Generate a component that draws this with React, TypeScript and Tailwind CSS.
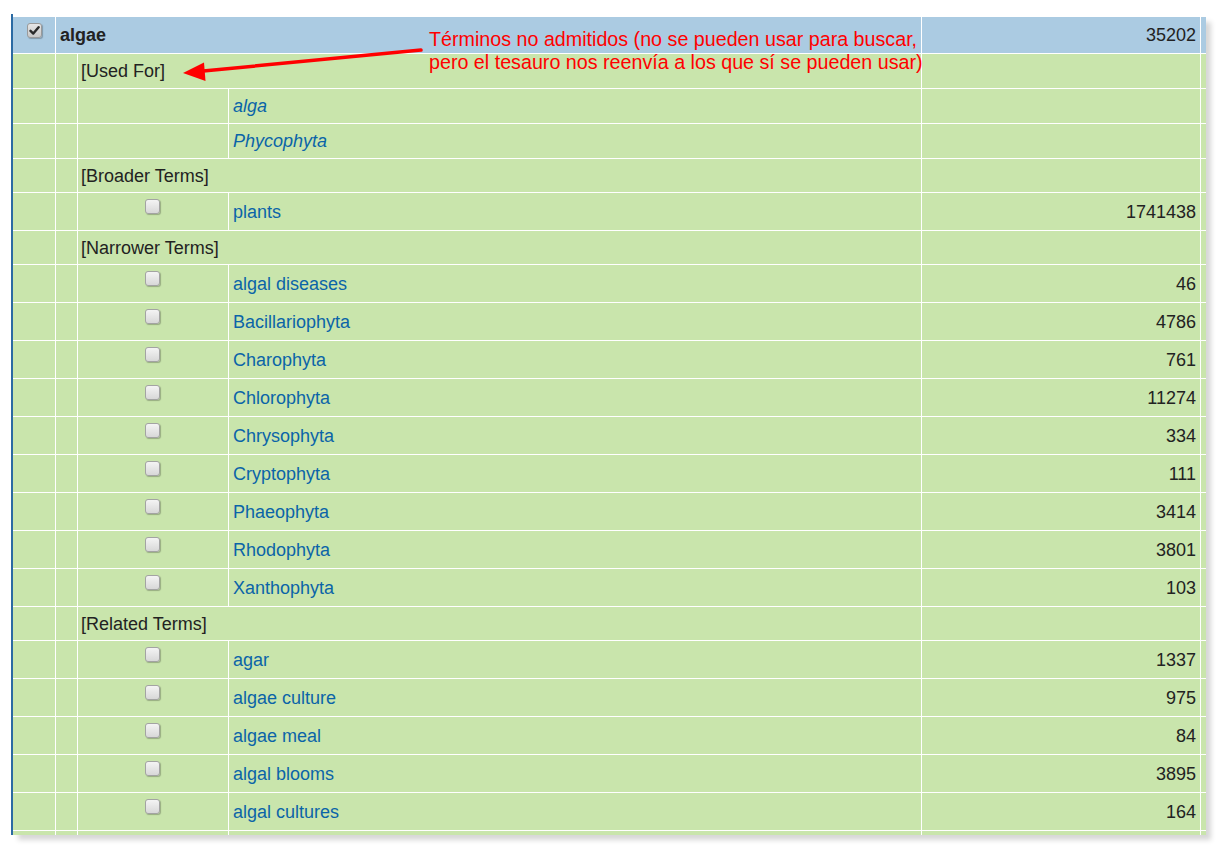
import React from "react";

type Row =
  | { kind: "section"; label: string; h: number }
  | { kind: "uf"; label: string }
  | { kind: "term"; label: string; count: string };

const rows: Row[] = [
  { kind: "section", label: "[Used For]", h: 35 },
  { kind: "uf", label: "alga" },
  { kind: "uf", label: "Phycophyta" },
  { kind: "section", label: "[Broader Terms]", h: 34 },
  { kind: "term", label: "plants", count: "1741438" },
  { kind: "section", label: "[Narrower Terms]", h: 34 },
  { kind: "term", label: "algal diseases", count: "46" },
  { kind: "term", label: "Bacillariophyta", count: "4786" },
  { kind: "term", label: "Charophyta", count: "761" },
  { kind: "term", label: "Chlorophyta", count: "11274" },
  { kind: "term", label: "Chrysophyta", count: "334" },
  { kind: "term", label: "Cryptophyta", count: "111" },
  { kind: "term", label: "Phaeophyta", count: "3414" },
  { kind: "term", label: "Rhodophyta", count: "3801" },
  { kind: "term", label: "Xanthophyta", count: "103" },
  { kind: "section", label: "[Related Terms]", h: 34 },
  { kind: "term", label: "agar", count: "1337" },
  { kind: "term", label: "algae culture", count: "975" },
  { kind: "term", label: "algae meal", count: "84" },
  { kind: "term", label: "algal blooms", count: "3895" },
  { kind: "term", label: "algal cultures", count: "164" },
];

function Checkbox({ checked }: { checked?: boolean }) {
  return (
    <div
      className={
        checked
          ? "w-[15px] h-[15px] rounded-[3px] border border-[#9a9a9a] bg-gradient-to-b from-[#e6e6e6] to-[#c8c8c8] shadow-[1px_1px_1px_rgba(0,0,0,0.25)] flex items-center justify-center"
          : "w-[15px] h-[15px] rounded-[3px] border border-[#a3a3a3] bg-gradient-to-b from-[#f4f4f4] to-[#d8d8d8] shadow-[1px_1px_1px_rgba(0,0,0,0.25)] flex items-center justify-center"
      }
    >
      {checked && (
        <svg width="11" height="11" viewBox="0 0 11 11">
          <path d="M1.5 5.8 L4.3 8.6 L9.6 2.2" fill="none" stroke="#2b2b2b" strokeWidth="2.4" strokeLinecap="round" strokeLinejoin="round" />
        </svg>
      )}
    </div>
  );
}

export default function App() {
  return (
    <div className="relative w-[1219px] h-[850px] bg-white font-['Liberation_Sans',Arial,sans-serif] text-[18px] text-[#222222]">
      <div className="absolute left-[11px] top-[14px] w-[1195px] h-[821px] border-l-2 border-[#2b6aa3] pt-[3px] overflow-visible">
        <div className="w-[1193px] h-[818px] overflow-hidden shadow-[5px_5px_5px_rgba(0,0,0,0.16)]">
          {/* header */}
          <div className="flex h-[37px] border-b border-white bg-[#abcbe2]">
            <div className="w-[43px] border-r border-white flex justify-center pt-[6px]">
              <Checkbox checked />
            </div>
            <div className="w-[866px] border-r border-white flex items-center pl-[4px] pt-[1px] font-bold">algae</div>
            <div className="w-[279px] border-r border-white flex items-center justify-end pr-[4px] pt-[1px]">35202</div>
            <div className="w-[5px]" />
          </div>
          {rows.map((r, i) => {
            if (r.kind === "section") {
              return (
                <div key={i} className="flex border-b border-white bg-[#c9e5ac]" style={{ height: r.h }}>
                  <div className="w-[43px] border-r border-white" />
                  <div className="w-[22px] border-r border-white" />
                  <div className="w-[844px] border-r border-white flex items-center pl-[3px] pt-[1px]">{r.label}</div>
                  <div className="w-[279px] border-r border-white" />
                  <div className="w-[5px]" />
                </div>
              );
            }
            if (r.kind === "uf") {
              return (
                <div key={i} className="flex h-[35px] border-b border-white bg-[#c9e5ac]">
                  <div className="w-[43px] border-r border-white" />
                  <div className="w-[22px] border-r border-white" />
                  <div className="w-[151px] border-r border-white" />
                  <div className="w-[693px] border-r border-white flex items-center pl-[4px] italic text-[#0b64a8]">{r.label}</div>
                  <div className="w-[279px] border-r border-white" />
                  <div className="w-[5px]" />
                </div>
              );
            }
            return (
              <div key={i} className="flex h-[38px] border-b border-white bg-[#c9e5ac]">
                <div className="w-[43px] border-r border-white" />
                <div className="w-[22px] border-r border-white" />
                <div className="w-[151px] border-r border-white flex justify-center pt-[6px] pr-[2px]">
                  <Checkbox />
                </div>
                <div className="w-[693px] border-r border-white flex items-center pl-[4px] pt-[1px] text-[#0b64a8]">{r.label}</div>
                <div className="w-[279px] border-r border-white flex items-center justify-end pr-[4px] pt-[1px]">{r.count}</div>
                <div className="w-[5px]" />
              </div>
            );
          })}
          <div className="flex h-[10px] bg-[#c9e5ac]">
            <div className="w-[43px] border-r border-white" />
            <div className="w-[22px] border-r border-white" />
            <div className="w-[151px] border-r border-white" />
            <div className="w-[693px] border-r border-white" />
            <div className="w-[279px] border-r border-white" />
            <div className="w-[5px]" />
          </div>
        </div>
      </div>

      {/* annotation */}
      <svg className="absolute left-0 top-0 pointer-events-none" width="1219" height="850">
        <line x1="421" y1="50" x2="198" y2="71.5" stroke="#ff0000" strokeWidth="3.5" strokeLinecap="round" />
        <polygon points="183,73 204,62.5 205.5,81" fill="#ff0000" />
      </svg>
      <div className="absolute left-[429px] top-[28px] text-[#ff0000] text-[19.7px] leading-[23px] whitespace-nowrap">
        <div>Términos no admitidos (no se pueden usar para buscar,</div>
        <div>pero el tesauro nos reenvía a los que sí se pueden usar)</div>
      </div>
    </div>
  );
}
